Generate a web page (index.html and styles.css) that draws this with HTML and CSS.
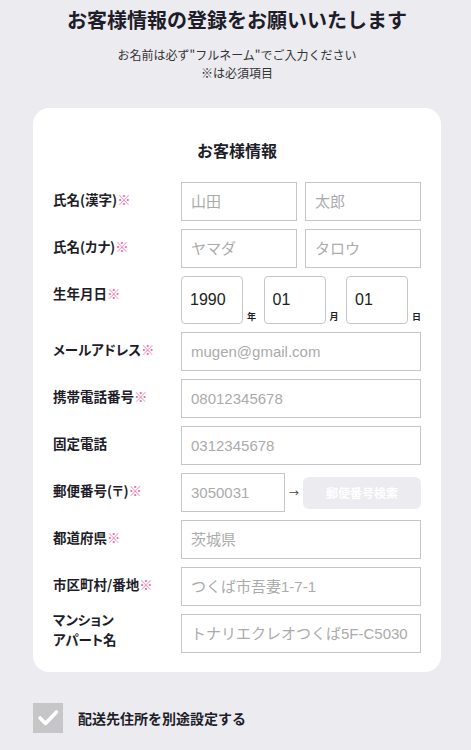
FILE: index.html
```html
<!DOCTYPE html>
<html lang="ja">
<head>
  <meta charset="UTF-8">
  <title>お客様情報の登録</title>
  <link rel="stylesheet" href="styles.css">
</head>
<body>

<div class="page">
  <h1>お客様情報の登録をお願いいたします</h1>
  <p class="lead">お名前は必ず"フルネーム"でご入力ください<br>※は必須項目</p>

  <div class="card">
    <h2>お客様情報</h2>

    <div class="row">
      <label class="label">氏名(漢字)<span class="req">※</span></label>
      <div class="field field-half">
        <input type="text" placeholder="山田">
        <input type="text" placeholder="太郎">
      </div>
    </div>

    <div class="row">
      <label class="label">氏名(カナ)<span class="req">※</span></label>
      <div class="field field-half">
        <input type="text" placeholder="ヤマダ">
        <input type="text" placeholder="タロウ">
      </div>
    </div>

    <div class="row row-date">
      <label class="label">生年月日<span class="req">※</span></label>
      <div class="field field-date">
        <div class="date-part"><input class="date" type="text" value="1990"><span class="unit">年</span></div>
        <div class="date-part"><input class="date" type="text" value="01"><span class="unit">月</span></div>
        <div class="date-part"><input class="date" type="text" value="01"><span class="unit">日</span></div>
      </div>
    </div>

    <div class="row">
      <label class="label">メールアドレス<span class="req">※</span></label>
      <div class="field"><input type="text" placeholder="mugen@gmail.com"></div>
    </div>

    <div class="row">
      <label class="label">携帯電話番号<span class="req">※</span></label>
      <div class="field"><input type="text" placeholder="08012345678"></div>
    </div>

    <div class="row">
      <label class="label">固定電話</label>
      <div class="field"><input type="text" placeholder="0312345678"></div>
    </div>

    <div class="row">
      <label class="label">郵便番号(〒)<span class="req">※</span></label>
      <div class="field field-zip">
        <input class="zip" type="text" placeholder="3050031">
        <span class="arrow">→</span>
        <button class="zip-btn" type="button">郵便番号検索</button>
      </div>
    </div>

    <div class="row">
      <label class="label">都道府県<span class="req">※</span></label>
      <div class="field"><input type="text" placeholder="茨城県"></div>
    </div>

    <div class="row">
      <label class="label">市区町村/番地<span class="req">※</span></label>
      <div class="field"><input type="text" placeholder="つくば市吾妻1-7-1"></div>
    </div>

    <div class="row">
      <label class="label label-two">マンション<br>アパート名</label>
      <div class="field"><input type="text" placeholder="トナリエクレオつくば5F-C5030"></div>
    </div>
  </div>

  <label class="check">
    <span class="check-box">
      <svg width="30" height="30" viewBox="0 0 30 30"><polyline points="7,15 12.5,20.5 23.5,9" fill="none" stroke="#fff" stroke-width="3.6" stroke-linecap="round" stroke-linejoin="round"/></svg>
    </span>
    <span class="check-text">配送先住所を別途設定する</span>
  </label>
</div>

</body>
</html>
```

FILE: styles.css
```css
body {
  margin: 0;
  background-color: #ecebf0;
  font-family: "Noto Sans CJK JP", sans-serif;
  color: #1d1d29;
}
.page {
  padding: 8px 30px 20px 33px;
}
h1 {
  margin: 0;
  font-size: 20px;
  line-height: 24px;
  text-align: center;
  font-weight: bold;
}
.lead {
  margin: 14px 0 26px;
  font-size: 12px;
  line-height: 18px;
  text-align: center;
  color: #333;
}
.card {
  width: 408px;
  box-sizing: border-box;
  background: white;
  border-radius: 16px;
  padding: 32px 20px 19px;
  display: flex;
  flex-direction: column;
  gap: 8px;
}
h2 {
  margin: 0 0 14px;
  font-size: 16px;
  line-height: 20px;
  text-align: center;
}
.row {
  display: flex;
  align-items: center;
}
.label {
  width: 128px;
  flex: none;
  font-size: 13.5px;
  line-height: 20px;
  font-weight: bold;
  font-feature-settings: "palt";
  margin-bottom: 5px;
}
.row-date {
  align-items: flex-start;
}
.row-date .label {
  padding-top: 7px;
  margin-bottom: 0;
}
.label-two {
  margin-top: -5px;
  margin-bottom: 4px;
}
.req {
  color: #f06aa8;
}
.field {
  flex: 1;
  display: flex;
  gap: 8px;
}
input {
  box-sizing: border-box;
  width: 100%;
  height: 39px;
  margin: 0;
  padding: 0 9px;
  border: 1px solid #c6c6c8;
  border-radius: 0;
  background: white;
  font-family: "Liberation Sans", "Noto Sans CJK JP", sans-serif;
  font-size: 15px;
  color: #222;
  outline: none;
}
input::placeholder {
  color: #ababab;
}
.field-half input {
  flex: 1;
}
.field-date {
  justify-content: space-between;
  gap: 0;
}
.date-part {
  width: 75px;
  display: flex;
  align-items: flex-end;
  gap: 4px;
}
.date {
  width: 62px;
  height: 48px;
  border-radius: 4px;
  font-size: 16px;
  padding: 0 8px;
}
.unit {
  font-size: 9px;
  line-height: 12px;
  font-weight: bold;
  padding-bottom: 1px;
}
.field-zip {
  align-items: center;
  gap: 0;
}
.zip {
  width: 104px;
  flex: none;
}
.arrow {
  width: 18px;
  text-align: center;
  font-size: 10px;
  color: #444;
}
.zip-btn {
  flex: 1;
  height: 32px;
  border: none;
  border-radius: 6px;
  background: #ecebf0;
  color: white;
  font-family: "Noto Sans CJK JP", sans-serif;
  font-size: 12px;
  font-weight: bold;
}
.check {
  margin-top: 31px;
  display: flex;
  align-items: center;
  gap: 15px;
}
.check-box {
  width: 30px;
  height: 30px;
  background: #c6c6c8;
  display: block;
}
.check-box svg {
  display: block;
}
.check-text {
  font-size: 14px;
  font-weight: bold;
}
```
